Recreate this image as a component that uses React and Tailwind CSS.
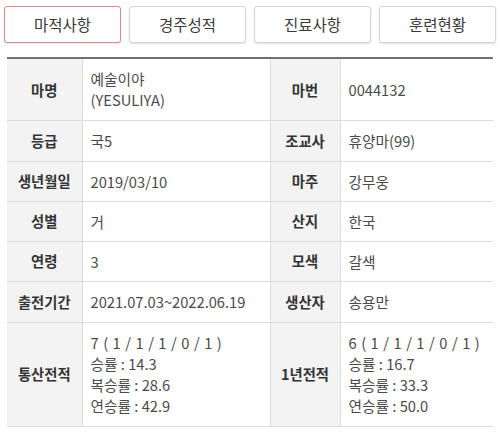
const tabs = ['마적사항', '경주성적', '진료사항', '훈련현황']

const rows = [
  { h: 'h-[62px]', a: '마명', av: ['예술이야', '(YESULIYA)'], b: '마번', bv: ['0044132'] },
  { h: 'h-[41px]', a: '등급', av: ['국5'], b: '조교사', bv: ['휴양마(99)'] },
  { h: 'h-[40px]', a: '생년월일', av: ['2019/03/10'], b: '마주', bv: ['강무웅'] },
  { h: 'h-[40px]', a: '성별', av: ['거'], b: '산지', bv: ['한국'] },
  { h: 'h-[40px]', a: '연령', av: ['3'], b: '모색', bv: ['갈색'] },
  { h: 'h-[41px]', a: '출전기간', av: ['2021.07.03~2022.06.19'], b: '생산자', bv: ['송용만'] },
  {
    h: 'h-[104px]',
    a: '통산전적',
    av: ['7 ( 1 / 1 / 1 / 0 / 1 )', '승률 : 14.3', '복승률 : 28.6', '연승률 : 42.9'],
    b: '1년전적',
    bv: ['6 ( 1 / 1 / 1 / 0 / 1 )', '승률 : 16.7', '복승률 : 33.3', '연승률 : 50.0'],
  },
]

function Value({ lines, last }) {
  return (
    <td
      className={`pl-[8px] align-middle text-[14.7px] leading-[21px] text-[#4a4a4a] border-b border-[#dcdcdc] ${
        last ? '' : 'border-r'
      }`}
    >
      {lines.map((l, i) => (
        <div key={l} className={lines.length > 2 && i === 0 ? 'tracking-[0.6px]' : ''}>
          {l}
        </div>
      ))}
    </td>
  )
}

export default function App() {
  return (
    <div
      className="w-[500px] h-[433px] bg-white"
      style={{ fontFamily: '"Noto Sans CJK KR", "Noto Sans", sans-serif' }}
    >
      <div className="flex gap-[8px] px-[4px] pt-[6px]">
        {tabs.map((t, i) => (
          <button
            key={t}
            className={`flex-1 h-[37px] rounded-[3px] border-[1.5px] bg-white text-[15.5px] text-[#3a3a3a] shadow-[0_1px_2px_rgba(0,0,0,0.12)] ${
              i === 0 ? 'border-[#dc8a8a]' : 'border-[#d6d6d6]'
            }`}
          >
            {t}
          </button>
        ))}
      </div>

      <table className="mt-[14px] ml-[7px] w-[486px] border-collapse border-t-2 border-[#707070] table-fixed">
        <colgroup>
          <col className="w-[75px]" />
          <col className="w-[188px]" />
          <col className="w-[70px]" />
          <col className="w-[153px]" />
        </colgroup>
        <tbody>
          {rows.map((r) => (
            <tr key={r.a} className={r.h}>
              <td className="bg-[#f3f3f3] text-center align-middle text-[14.3px] font-bold text-[#333] border-b border-r border-[#dcdcdc]">
                {r.a}
              </td>
              <Value lines={r.av} />
              <td className="bg-[#f3f3f3] text-center align-middle text-[14.3px] font-bold text-[#333] border-b border-r border-[#dcdcdc]">
                {r.b}
              </td>
              <Value lines={r.bv} last />
            </tr>
          ))}
        </tbody>
      </table>
    </div>
  )
}
